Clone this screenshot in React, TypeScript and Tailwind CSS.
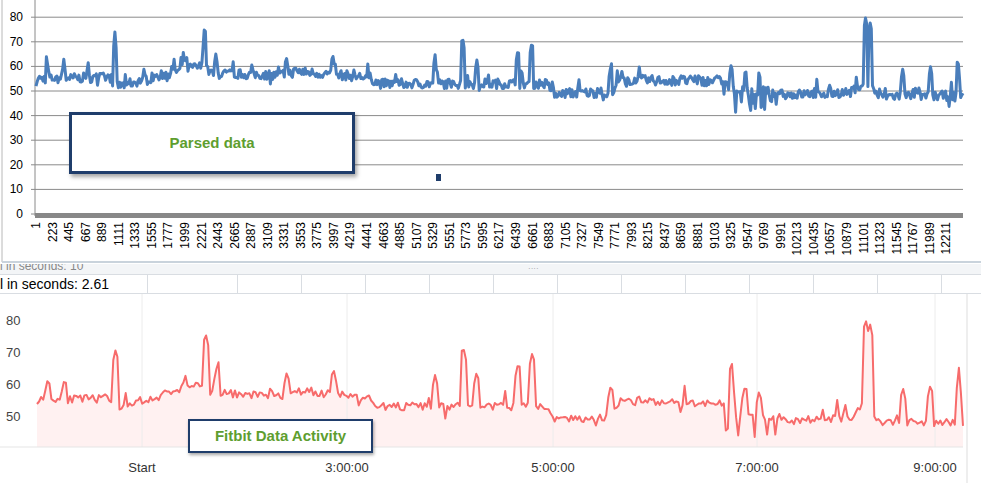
import React from "react";

// deterministic noise
function rng(seed: number) {
  let s = seed;
  return () => {
    s = (s * 16807) % 2147483647;
    return (s - 1) / 2147483646;
  };
}

const base: [number, number][] = [
  [0, 55], [0.08, 55.5], [0.09, 52], [0.1, 53], [0.16, 59], [0.18, 60], [0.19, 57], [0.27, 56.5],
  [0.28, 58], [0.36, 55.5], [0.37, 53], [0.55, 53], [0.56, 49], [0.62, 49.5], [0.63, 54.5], [0.74, 54],
  [0.75, 50], [0.8, 50], [0.81, 48.5], [0.88, 49.5], [0.89, 53], [0.9, 52], [0.91, 48], [1, 48],
];
const spikes: [number, number][] = [
  [0.012, 62], [0.03, 62], [0.085, 71], [0.16, 63], [0.182, 76], [0.194, 65], [0.27, 64], [0.32, 65],
  [0.43, 63], [0.46, 72], [0.475, 64], [0.52, 67], [0.535, 70], [0.62, 60], [0.75, 67], [0.765, 60],
  [0.78, 58], [0.895, 80], [0.9, 78], [0.935, 59], [0.965, 60], [0.995, 61],
];

function level(f: number) {
  for (let i = 1; i < base.length; i++) {
    if (f <= base[i][0]) {
      const [x0, y0] = base[i - 1];
      const [x1, y1] = base[i];
      return y0 + ((f - x0) / (x1 - x0)) * (y1 - y0);
    }
  }
  return 48;
}

function series(n: number, seed: number, noise: number, jump: number) {
  const r = rng(seed);
  const out: number[] = [];
  for (let i = 0; i < n; i++) {
    const f = i / (n - 1);
    let v = level(f) + (r() - 0.5) * noise;
    for (const [sx, sv] of spikes) {
      const d = Math.abs(f - sx) * n;
      if (d < 1.5) v = Math.max(v, sv - d * 3);
    }
    if (r() > jump) v += (r() - 0.4) * 9;
    if ((f > 0.74 && f < 0.8) && r() > 0.6) v -= 6;
    out.push(v);
  }
  return out;
}

const topData = series(800, 7, 4, 0.88);
const botData = series(450, 11, 2.5, 0.93);

const xLabels = Array.from({ length: 56 }, (_, i) => 1 + i * 222);

function TopChart() {
  const x0 = 36, x1 = 963;
  const yOf = (v: number) => 214 - (v / 10) * 24.6;
  const pts = topData.map((v, i) => `${(x0 + (i / (topData.length - 1)) * (x1 - x0)).toFixed(1)},${yOf(v).toFixed(1)}`).join(" ");
  return (
    <svg width={981} height={264} className="block">
      <line x1={2} y1={0} x2={2} y2={262} stroke="#b8b8b8" />
      <line x1={2} y1={262} x2={981} y2={262} stroke="#c9d3dc" strokeWidth={2} />
      {Array.from({ length: 9 }, (_, i) => (
        <g key={i}>
          <line x1={31} x2={x1} y1={yOf(i * 10)} y2={yOf(i * 10)} stroke="#8a8a8a" strokeWidth={1} />
          <text x={23} y={yOf(i * 10) + 4} textAnchor="end" fontSize={12} fontFamily="Liberation Sans, sans-serif" fill="#000">{i * 10}</text>
        </g>
      ))}
      <line x1={35} x2={35} y1={0} y2={216} stroke="#8a8a8a" />
      <rect x={35} y={213} width={928} height={5} fill="#888" />
      {xLabels.map((l, i) => (
        <text key={l} transform={`translate(${40 + i * 16.55},222) rotate(-90)`} textAnchor="end" fontSize={12} fontFamily="Liberation Sans, sans-serif" fill="#000">{l}</text>
      ))}
      <polyline points={pts} fill="none" stroke="#4a7ebb" strokeWidth={3} strokeLinejoin="round" />
      <rect x={436} y={174} width={5} height={7} fill="#1f3d6b" />
    </svg>
  );
}

function BottomChart() {
  const x0 = 37, x1 = 963;
  const yOf = (v: number) => 417 - 295 - (v - 50) * 3.2;
  const pts = botData.map((v, i) => [x0 + (i / (botData.length - 1)) * (x1 - x0), yOf(v)]);
  const line = pts.map(([x, y]) => `${x.toFixed(1)},${y.toFixed(1)}`).join(" ");
  const area = `${x0},153 ${line} ${x1},153`;
  const ticks = [
    ["Start", 142], ["3:00:00", 347], ["5:00:00", 553], ["7:00:00", 757], ["9:00:00", 935],
  ] as const;
  return (
    <svg width={981} height={189} className="block">
      <polygon points={area} fill="#fff1f1" />
      {ticks.map(([t, x]) => (
        <g key={t}>
          <line x1={x} x2={x} y1={0} y2={153} stroke="#ececec" />
          <text x={x} y={178} textAnchor="middle" fontSize={13} fontFamily="Liberation Sans, sans-serif" fill="#333">{t}</text>
        </g>
      ))}
      {[80, 70, 60, 50].map((v) => (
        <text key={v} x={6} y={yOf(v) + 5} fontSize={13} fontFamily="Liberation Sans, sans-serif" fill="#444">{v}</text>
      ))}
      <line x1={0} x2={x1} y1={153} y2={153} stroke="#e5e5e5" />
      <polyline points={line} fill="none" stroke="#f76b6b" strokeWidth={2} strokeLinejoin="round" />
      <rect x={966} y={0} width={2} height={189} fill="#eee" />
    </svg>
  );
}

export default function App() {
  return (
    <div className="w-[981px] h-[484px] bg-white overflow-hidden relative" style={{ fontFamily: "Liberation Sans, sans-serif" }}>
      <TopChart />
      <div className="h-[11px] bg-[#f3f5f7] border-b border-[#d9dde2] overflow-hidden relative">
        <span className="absolute left-0 top-[-4px] text-[12px] leading-[12px] text-[#888]">l in seconds: 10</span>
        <span className="absolute left-[528px] top-[1px] text-[8px] leading-[8px] text-[#999]">····</span>
      </div>
      <div className="h-[19px] grid grid-cols-[147px_90px_64px_64px_64px_64px_64px_64px_64px_64px_64px_64px_64px_1fr] border-b border-[#d9dde2]">
        <div className="text-[14px] leading-[19px] text-black whitespace-nowrap">l in seconds: 2.61</div>
        {Array.from({ length: 13 }, (_, i) => (
          <div key={i} className="border-l border-[#d9dde2]" />
        ))}
      </div>
      <BottomChart />
      <div className="absolute left-[69px] top-[112px] w-[286px] h-[62px] border-[3px] border-[#1f3d6b] bg-white shadow-[2px_3px_4px_rgba(0,0,0,0.35)] flex items-center justify-center">
        <span className="text-[#5e9e2f] font-bold text-[15px]">Parsed data</span>
      </div>
      <div className="absolute left-[188px] top-[419px] w-[185px] h-[34px] border-[2px] border-[#1f3d6b] bg-white shadow-[1px_2px_3px_rgba(0,0,0,0.35)] flex items-center justify-center">
        <span className="text-[#5e9e2f] font-bold text-[15px]">Fitbit Data Activity</span>
      </div>
    </div>
  );
}
